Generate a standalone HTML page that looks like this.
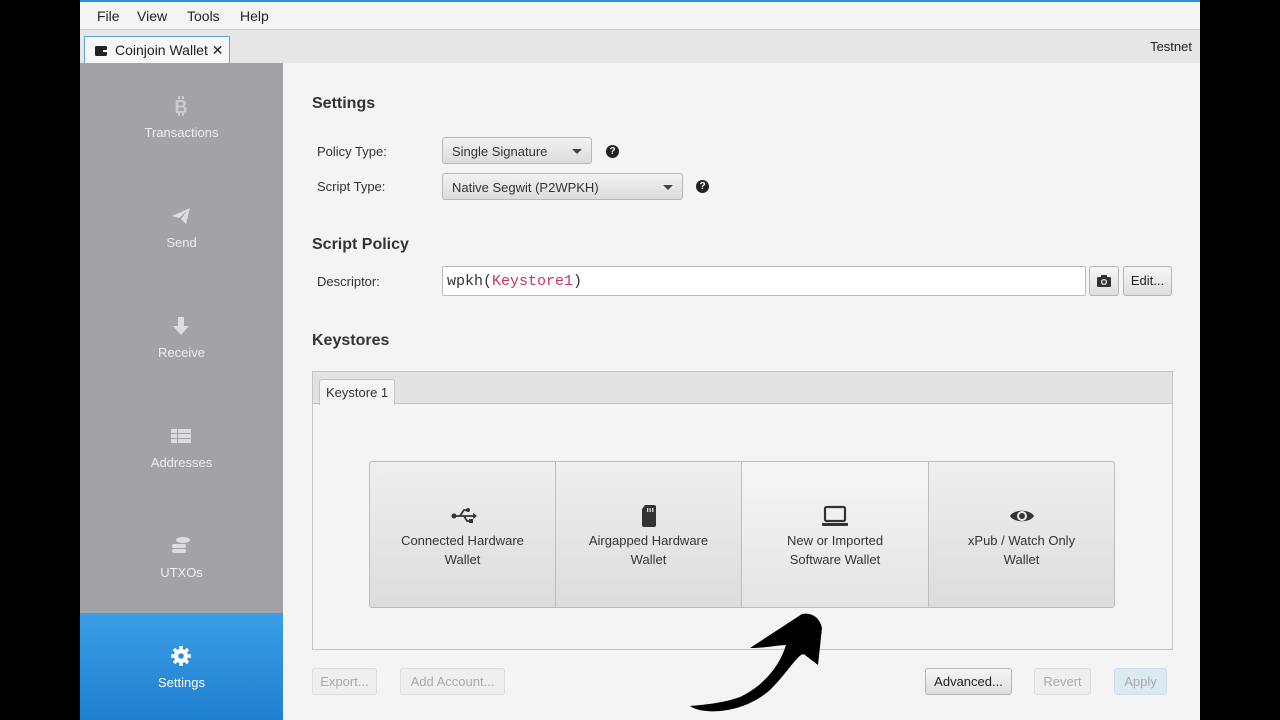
<!DOCTYPE html><html><head><style>
*{box-sizing:border-box;margin:0;padding:0}
body{width:1280px;height:720px;background:#000;position:relative;overflow:hidden;font-family:"Liberation Sans",sans-serif;font-size:13px;color:#333}
.app{position:absolute;left:80px;top:0;width:1120px;height:720px;background:#f4f4f4;overflow:hidden}
.topline{position:absolute;left:0;top:0;width:100%;height:2px;background:#2b8fd6}
.menu{position:absolute;top:2px;left:0;width:100%;height:28px;background:#f4f4f4;border-bottom:1px solid #ccc}
.menu span{position:absolute;top:6px;font-size:14px;color:#222}
.tabbar{position:absolute;top:30px;left:0;width:100%;height:33px;background:#e6e6e6}
.tab{position:absolute;left:4px;top:6px;width:146px;height:27px;background:#f7f7f7;border:1px solid #5aa9e0;border-bottom:none;font-size:14px;padding:5px 0 0 30px;color:#222}
.side{position:absolute;left:0;top:63px;width:203px;height:657px;background:#a2a3a9}
.it{position:absolute;left:0;width:203px;height:110px;color:#eee;text-align:center;font-size:13px}
.it .ic{position:absolute;left:91px;top:33px;width:20px;height:20px}
.it .lb{position:absolute;top:62px;width:100%}
.sel{background:linear-gradient(#3a9ee6,#1f7fd0);color:#fff}
h2{position:absolute;font-size:16px;font-weight:bold;color:#333}
.lbl{position:absolute;font-size:13px;color:#333}
.combo{position:absolute;height:27px;border:1px solid #b8b8b8;border-radius:3px;background:linear-gradient(#f2f2f2,#dcdcdc);font-size:13px;padding:6px 9px}
.combo:after{content:"";position:absolute;right:9px;top:11px;border:5px solid transparent;border-top:5px solid #444;border-bottom:none}
.q{position:absolute;width:13px;height:13px;border-radius:50%;background:#222;color:#fff;font-size:10px;font-weight:bold;text-align:center;line-height:13px}
.btn{position:absolute;height:27px;border:1px solid #b5b5b5;border-radius:3px;background:linear-gradient(#f6f6f6,#dedede);font-size:13px;text-align:center;line-height:25px;color:#222}
.dis{color:#aaa;border-color:#ddd;background:#efefef}
.card{position:absolute;top:461px;height:147px;background:linear-gradient(#efefef,#dcdcdc);border:1px solid #bdbdbd;text-align:center;font-size:13px;color:#333;line-height:19px}
.card svg{position:absolute;top:42px;left:50%;margin-left:-12px}
.card div{position:absolute;top:69px;width:100%}
</style></head><body>
<div class="app">
<div class="topline"></div>
<div class="menu"><span style="left:17px">File</span><span style="left:57px">View</span><span style="left:107px">Tools</span><span style="left:160px">Help</span></div>
<div class="tabbar"><div class="tab"><svg style="position:absolute;left:10px;top:9px" width="12" height="10"><rect width="12" height="10" rx="1.5" fill="#222"/><rect x="8" y="4" width="4" height="2" fill="#fff"/></svg>Coinjoin Wallet ✕</div><span style="position:absolute;right:8px;top:9px;font-size:13px;color:#222">Testnet</span></div>
<div class="side">
<div class="it" style="top:0"><svg class="ic" viewBox="0 0 20 20"><path d="M8 0v3M12 0v3M8 17v3M12 17v3" stroke="#ccc" stroke-width="2"/><text x="10" y="17" font-size="18" font-weight="bold" text-anchor="middle" fill="#ccc" font-family="Liberation Sans">B</text></svg><div class="lb">Transactions</div></div>
<div class="it" style="top:110px"><svg class="ic" viewBox="0 0 20 20"><path d="M1 10L19 2L15 18L10 13L16 5L8 12Z" fill="#ddd"/></svg><div class="lb">Send</div></div>
<div class="it" style="top:220px"><svg class="ic" viewBox="0 0 20 20"><path d="M7 1h6v9h5l-8 9l-8-9h5z" fill="#ddd"/></svg><div class="lb">Receive</div></div>
<div class="it" style="top:330px"><svg class="ic" viewBox="0 0 20 20"><path d="M0 3h6v4H0zM7 3h13v4H7zM0 8h6v4H0zM7 8h13v4H7zM0 13h6v4H0zM7 13h13v4H7z" fill="#ddd"/></svg><div class="lb">Addresses</div></div>
<div class="it" style="top:440px"><svg class="ic" viewBox="0 0 20 20"><ellipse cx="12" cy="4" rx="7" ry="3" fill="#ddd"/><rect x="1" y="8" width="14" height="4" rx="2" fill="#ddd"/><rect x="1" y="13" width="14" height="4" rx="2" fill="#ddd"/></svg><div class="lb">UTXOs</div></div>
<div class="it sel" style="top:550px"><svg class="ic" viewBox="0 0 20 20"><circle cx="10" cy="10" r="7" fill="#fff"/><path d="M10 0v20M0 10h20M3 3l14 14M17 3L3 17" stroke="#fff" stroke-width="3.5"/><circle cx="10" cy="10" r="2.8" fill="#2a8ddc"/></svg><div class="lb">Settings</div></div>
</div>
<h2 style="left:232px;top:95px">Settings</h2>
<div class="lbl" style="left:237px;top:144px">Policy Type:</div>
<div class="combo" style="left:362px;top:137px;width:150px">Single Signature</div><div class="q" style="left:526px;top:145px">?</div>
<div class="lbl" style="left:237px;top:179px">Script Type:</div>
<div class="combo" style="left:362px;top:173px;width:241px">Native Segwit (P2WPKH)</div><div class="q" style="left:616px;top:180px">?</div>
<h2 style="left:232px;top:236px">Script Policy</h2>
<div class="lbl" style="left:237px;top:274px">Descriptor:</div>
<div style="position:absolute;left:362px;top:266px;width:644px;height:30px;background:#fff;border:1px solid #bbb;border-radius:2px;font-family:'Liberation Mono',monospace;font-size:15px;padding:6px 4px;color:#333">wpkh(<span style="color:#c7355f">Keystore1</span>)</div>
<div class="btn" style="left:1009px;top:266px;width:30px;height:30px"><svg width="14" height="12" style="margin-top:8px"><rect y="2" width="14" height="10" rx="1.5" fill="#333"/><rect x="4" y="0" width="6" height="3" fill="#333"/><circle cx="7" cy="7" r="3" fill="#eee"/><circle cx="7" cy="7" r="1.7" fill="#333"/></svg></div>
<div class="btn" style="left:1043px;top:266px;width:49px;height:30px;line-height:28px">Edit...</div>
<h2 style="left:232px;top:332px">Keystores</h2>
<div style="position:absolute;left:232px;top:371px;width:861px;height:279px;border:1px solid #c4c4c4;background:#f4f4f4">
<div style="height:32px;background:#e2e2e2;border-bottom:1px solid #c4c4c4"></div>
<div style="position:absolute;left:6px;top:7px;width:76px;height:26px;background:#f4f4f4;border:1px solid #c4c4c4;border-bottom:none;border-radius:3px 3px 0 0;font-size:13px;padding:5px 0 0 6px;color:#333">Keystore 1</div>
</div>
<div class="card" style="left:289px;width:187px;border-radius:3px 0 0 3px"><svg width="26" height="24" viewBox="0 0 26 24"><circle cx="3" cy="12" r="2.5" fill="#333"/><path d="M3 12h19M9 12l4-6h4M13 12l3 5h3" stroke="#333" stroke-width="1.8" fill="none"/><path d="M22 9l4 3l-4 3z" fill="#333"/><circle cx="17" cy="6" r="2" fill="#333"/><rect x="18" y="15" width="4" height="4" fill="#333"/></svg><div>Connected Hardware<br>Wallet</div></div>
<div class="card" style="left:475px;width:187px"><svg width="24" height="24" viewBox="0 0 24 24"><path d="M8 1h9a2 2 0 0 1 2 2v18a2 2 0 0 1-2 2H7a2 2 0 0 1-2-2V5z" fill="#333"/><rect x="10" y="4" width="1.3" height="4" fill="#ddd"/><rect x="12.5" y="4" width="1.3" height="4" fill="#ddd"/><rect x="15" y="4" width="1.3" height="4" fill="#ddd"/></svg><div>Airgapped Hardware<br>Wallet</div></div>
<div class="card" style="left:661px;width:188px;background:linear-gradient(#f6f6f6,#e4e4e4)"><svg width="28" height="24" viewBox="0 0 28 24" style="margin-left:-14px"><rect x="4" y="3" width="20" height="14" rx="1.5" fill="none" stroke="#333" stroke-width="2.2"/><path d="M1 19h26v2a1 1 0 0 1-1 1H2a1 1 0 0 1-1-1z" fill="#333"/></svg><div>New or Imported<br>Software Wallet</div></div>
<div class="card" style="left:848px;width:187px;border-radius:0 3px 3px 0"><svg width="28" height="24" viewBox="0 0 28 24" style="margin-left:-14px"><path d="M2 12C6 5 22 5 26 12C22 19 6 19 2 12Z" fill="#333"/><circle cx="14" cy="12" r="5" fill="#eee"/><circle cx="14" cy="12" r="3" fill="#333"/></svg><div>xPub / Watch Only<br>Wallet</div></div>
<div class="btn dis" style="left:232px;top:668px;width:65px">Export...</div>
<div class="btn dis" style="left:320px;top:668px;width:105px">Add Account...</div>
<div class="btn" style="left:845px;top:668px;width:87px">Advanced...</div>
<div class="btn dis" style="left:954px;top:668px;width:57px">Revert</div>
<div class="btn dis" style="left:1034px;top:668px;width:53px;background:#dde9f1;border-color:#cde">Apply</div>
</div>
<svg style="position:absolute;left:0;top:0" width="1280" height="720"><path d="M690 706C700 714 740 716 770 690C790 670 800 650 805 655L818 665L822 628C820 618 812 612 802 614L750 648C765 648 780 645 786 645C780 665 765 685 740 697C720 704 700 705 690 706Z" fill="#000"/></svg>
</body></html>
